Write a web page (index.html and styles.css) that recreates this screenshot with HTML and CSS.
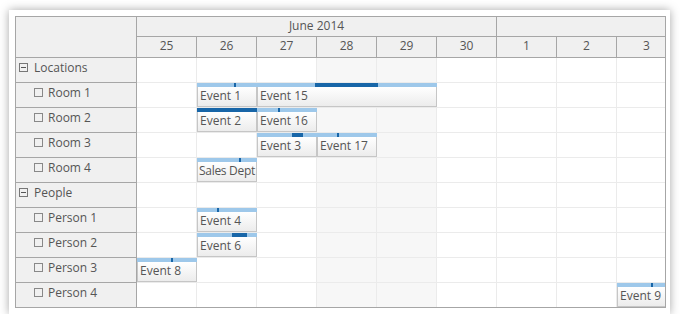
FILE: index.html
```html
<!DOCTYPE html>
<html lang="en">

<head>
  <meta charset="UTF-8">
  <meta name="viewport" content="width=device-width, initial-scale=1.0">
  <title>Scheduler</title>
  <link rel="stylesheet" href="styles.css">
</head>

<body>
  <div class="panel">
    <div class="scheduler">

      <!-- time header -->
      <div class="head">
        <div class="corner"></div>
        <div class="timeheader">
          <div class="months">
            <div class="month m-june">June 2014</div>
            <div class="month m-july"></div>
          </div>
          <div class="days">
            <div class="day">25</div>
            <div class="day">26</div>
            <div class="day">27</div>
            <div class="day">28</div>
            <div class="day">29</div>
            <div class="day">30</div>
            <div class="day">1</div>
            <div class="day">2</div>
            <div class="day">3</div>
          </div>
        </div>
      </div>

      <!-- Locations -->
      <div class="row">
        <div class="rh parent"><span class="toggle"></span>Locations</div>
        <div class="tl">
          <div class="cell"></div><div class="cell"></div><div class="cell"></div>
          <div class="cell we"></div><div class="cell we"></div><div class="cell"></div>
          <div class="cell"></div><div class="cell"></div><div class="cell"></div>
        </div>
      </div>

      <div class="row">
        <div class="rh child"><span class="box"></span>Room 1</div>
        <div class="tl">
          <div class="cell"></div><div class="cell"></div><div class="cell"></div>
          <div class="cell we"></div><div class="cell we"></div><div class="cell"></div>
          <div class="cell"></div><div class="cell"></div><div class="cell"></div>
          <div class="event" style="left: 60px; width: 60px;">
            <div class="bar"><span class="done" style="left: 37px; width: 2px;"></span></div>
            <div class="ev-inner">Event 1</div>
          </div>
          <div class="event" style="left: 120px; width: 180px;">
            <div class="bar"><span class="done" style="left: 58px; width: 63px;"></span></div>
            <div class="ev-inner">Event 15</div>
          </div>
        </div>
      </div>

      <div class="row">
        <div class="rh child"><span class="box"></span>Room 2</div>
        <div class="tl">
          <div class="cell"></div><div class="cell"></div><div class="cell"></div>
          <div class="cell we"></div><div class="cell we"></div><div class="cell"></div>
          <div class="cell"></div><div class="cell"></div><div class="cell"></div>
          <div class="event" style="left: 60px; width: 60px;">
            <div class="bar"><span class="done" style="left: 0; width: 60px;"></span></div>
            <div class="ev-inner">Event 2</div>
          </div>
          <div class="event" style="left: 120px; width: 60px;">
            <div class="bar"><span class="done" style="left: 21px; width: 2px;"></span></div>
            <div class="ev-inner">Event 16</div>
          </div>
        </div>
      </div>

      <div class="row">
        <div class="rh child"><span class="box"></span>Room 3</div>
        <div class="tl">
          <div class="cell"></div><div class="cell"></div><div class="cell"></div>
          <div class="cell we"></div><div class="cell we"></div><div class="cell"></div>
          <div class="cell"></div><div class="cell"></div><div class="cell"></div>
          <div class="event" style="left: 120px; width: 60px;">
            <div class="bar"><span class="done" style="left: 35px; width: 11px;"></span></div>
            <div class="ev-inner">Event 3</div>
          </div>
          <div class="event" style="left: 180px; width: 60px;">
            <div class="bar"><span class="done" style="left: 20px; width: 2px;"></span></div>
            <div class="ev-inner">Event 17</div>
          </div>
        </div>
      </div>

      <div class="row">
        <div class="rh child"><span class="box"></span>Room 4</div>
        <div class="tl">
          <div class="cell"></div><div class="cell"></div><div class="cell"></div>
          <div class="cell we"></div><div class="cell we"></div><div class="cell"></div>
          <div class="cell"></div><div class="cell"></div><div class="cell"></div>
          <div class="event" style="left: 60px; width: 60px;">
            <div class="bar"><span class="done" style="left: 42px; width: 2px;"></span></div>
            <div class="ev-inner tight">Sales Dept</div>
          </div>
        </div>
      </div>

      <!-- People -->
      <div class="row">
        <div class="rh parent"><span class="toggle"></span>People</div>
        <div class="tl">
          <div class="cell"></div><div class="cell"></div><div class="cell"></div>
          <div class="cell we"></div><div class="cell we"></div><div class="cell"></div>
          <div class="cell"></div><div class="cell"></div><div class="cell"></div>
        </div>
      </div>

      <div class="row">
        <div class="rh child"><span class="box"></span>Person 1</div>
        <div class="tl">
          <div class="cell"></div><div class="cell"></div><div class="cell"></div>
          <div class="cell we"></div><div class="cell we"></div><div class="cell"></div>
          <div class="cell"></div><div class="cell"></div><div class="cell"></div>
          <div class="event" style="left: 60px; width: 60px;">
            <div class="bar"><span class="done" style="left: 20px; width: 2px;"></span></div>
            <div class="ev-inner">Event 4</div>
          </div>
        </div>
      </div>

      <div class="row">
        <div class="rh child"><span class="box"></span>Person 2</div>
        <div class="tl">
          <div class="cell"></div><div class="cell"></div><div class="cell"></div>
          <div class="cell we"></div><div class="cell we"></div><div class="cell"></div>
          <div class="cell"></div><div class="cell"></div><div class="cell"></div>
          <div class="event" style="left: 60px; width: 60px;">
            <div class="bar"><span class="done" style="left: 35px; width: 15px;"></span></div>
            <div class="ev-inner">Event 6</div>
          </div>
        </div>
      </div>

      <div class="row">
        <div class="rh child"><span class="box"></span>Person 3</div>
        <div class="tl">
          <div class="cell"></div><div class="cell"></div><div class="cell"></div>
          <div class="cell we"></div><div class="cell we"></div><div class="cell"></div>
          <div class="cell"></div><div class="cell"></div><div class="cell"></div>
          <div class="event" style="left: 0; width: 60px;">
            <div class="bar"><span class="done" style="left: 34px; width: 2px;"></span></div>
            <div class="ev-inner">Event 8</div>
          </div>
        </div>
      </div>

      <div class="row">
        <div class="rh child"><span class="box"></span>Person 4</div>
        <div class="tl">
          <div class="cell"></div><div class="cell"></div><div class="cell"></div>
          <div class="cell we"></div><div class="cell we"></div><div class="cell"></div>
          <div class="cell"></div><div class="cell"></div><div class="cell"></div>
          <div class="event" style="left: 480px; width: 60px;">
            <div class="bar"><span class="done" style="left: 34px; width: 2px;"></span></div>
            <div class="ev-inner">Event 9</div>
          </div>
        </div>
      </div>

    </div>
  </div>
</body>

</html>
```

FILE: styles.css
```css
* {
  box-sizing: border-box;
}

body {
  margin: 0;
  background: #ffffff;
  font-family: "Open Sans", "DejaVu Sans", sans-serif;
  font-size: 12px;
  color: #555555;
}

.panel {
  margin: 10px 0 0 9px;
  width: 661px;
  height: 304px;
  padding: 6px 0 0 6px;
  background: #ffffff;
  box-shadow: 0 0 9px rgba(0, 0, 0, 0.35);
}

.scheduler {
  width: 651px;
  height: 292px;
  border: 1px solid #a6a6a6;
  overflow: hidden;
}

/* header */
.head {
  display: flex;
}

.corner {
  flex: none;
  width: 121px;
  height: 41px;
  background: #f0f0f0;
  border-right: 1px solid #a6a6a6;
  border-bottom: 1px solid #a6a6a6;
}

.timeheader {
  flex: none;
  width: 540px;
}

.months, .days {
  display: flex;
}

.month {
  height: 20px;
  line-height: 18px;
  text-align: center;
  background: #f0f0f0;
  border-right: 1px solid #a6a6a6;
  border-bottom: 1px solid #a6a6a6;
}

.m-june {
  width: 360px;
}

.m-july {
  width: 180px;
}

.day {
  width: 60px;
  height: 21px;
  line-height: 17px;
  text-align: center;
  background: #f0f0f0;
  border-right: 1px solid #a6a6a6;
  border-bottom: 1px solid #a6a6a6;
}

/* rows */
.row {
  display: flex;
  height: 25px;
}

.rh {
  flex: none;
  width: 121px;
  display: flex;
  align-items: center;
  padding-bottom: 6px;
  background: #f0f0f0;
  border-right: 1px solid #a6a6a6;
  border-bottom: 1px solid #a6a6a6;
  white-space: nowrap;
}

.rh.parent {
  padding-left: 3px;
}

.rh.child {
  padding-left: 18px;
}

.toggle, .box {
  flex: none;
  width: 9px;
  height: 9px;
  margin-right: 6px;
  border: 1px solid #777777;
  position: relative;
}

.toggle::after {
  content: "";
  position: absolute;
  left: 1px;
  top: 3px;
  width: 5px;
  height: 1px;
  background: #555555;
}

.box {
  margin-right: 5px;
  border-color: #888888;
}

.tl {
  flex: none;
  width: 540px;
  display: flex;
  position: relative;
}

.cell {
  width: 60px;
  height: 25px;
  border-right: 1px solid #ebebeb;
  border-bottom: 1px solid #ebebeb;
}

.cell.we {
  background: #f7f7f7;
}

/* events */
.event {
  position: absolute;
  top: 0;
  height: 24px;
}

.bar {
  position: relative;
  height: 4px;
  background: #9ec8ea;
}

.done {
  position: absolute;
  top: 0;
  height: 4px;
  background: #1866a8;
}

.ev-inner {
  height: 20px;
  padding-left: 2px;
  line-height: 18px;
  white-space: nowrap;
  overflow: hidden;
  background: linear-gradient(#ffffff, #ececec);
  border: 1px solid #c6c6c6;
  border-top: none;
}

.ev-inner.tight {
  padding-left: 1px;
  letter-spacing: -0.3px;
}
```
